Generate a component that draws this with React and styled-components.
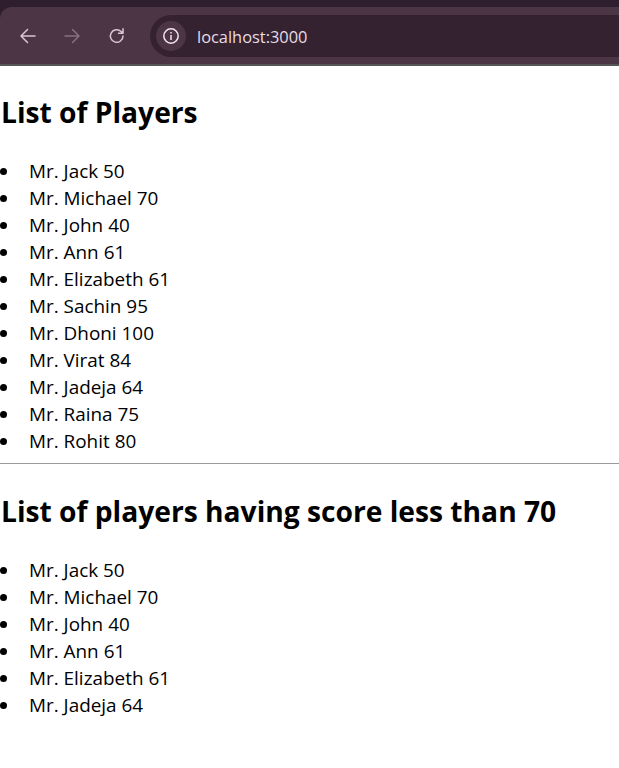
import React from 'react';
import styled, { createGlobalStyle } from 'styled-components';

const Global = createGlobalStyle`
  html, body { margin: 0; padding: 0; background: #fff; }
  body { font-family: "Open Sans", "Noto Sans", "Liberation Sans", sans-serif; color: #000; }
`;
const Chrome = styled.header`
  background: #2f1e2e;
  padding-top: 7px;
`;
const Toolbar = styled.div`
  height: 56px;
  padding: 1px 0 0 16px;
  background: #4c3646;
  border-top-left-radius: 12px;
  border-bottom: 2px solid #555;
  display: flex;
  align-items: center;
`;
const NavButton = styled.span`
  width: 24px;
  height: 24px;
  margin-right: ${p => p.$gap}px;
  display: flex;
  align-items: center;
  justify-content: center;
  color: ${p => p.$color};
`;
const Omnibox = styled.div`
  flex: 1;
  height: 42px;
  background: #342231;
  border-radius: 21px 0 0 21px;
  display: flex;
  align-items: center;
  padding-left: 6px;
`;
const InfoChip = styled.span`
  width: 30px;
  height: 30px;
  border-radius: 50%;
  background: #4c3646;
  display: flex;
  align-items: center;
  justify-content: center;
  color: #f2e6ee;
`;
const Url = styled.span`
  margin-left: 11px;
  font-size: 16.4px;
  color: #e8dce4;
`;
const Page = styled.main``;
const Title = styled.h2`
  font-size: 28.2px;
  line-height: 37px;
  font-weight: 700;
  margin: ${p => p.$top}px 0 ${p => p.$bottom}px 1px;
`;
const List = styled.ul`
  margin: 0;
  padding: 0;
  list-style: none;
`;
const Item = styled.li`
  display: flex;
  align-items: center;
  font-size: 18.9px;
  line-height: 27px;
  &::before {
    content: "";
    width: 7px;
    height: 7px;
    border-radius: 50%;
    background: #000;
    margin-right: 22px;
  }
`;
const Rule = styled.hr`
  margin: 8px 0 0;
  border: 0;
  height: 1px;
  background: #9a9a9a;
`;

const all = [['Jack',50],['Michael',70],['John',40],['Ann',61],['Elizabeth',61],['Sachin',95],['Dhoni',100],['Virat',84],['Jadeja',64],['Raina',75],['Rohit',80]];
const low = [['Jack',50],['Michael',70],['John',40],['Ann',61],['Elizabeth',61],['Jadeja',64]];

const Icon = ({ d }) => (
  <svg width="20" height="20" viewBox="0 0 20 20" fill="none" stroke="currentColor" strokeWidth="1.5" strokeLinecap="round" strokeLinejoin="round"><path d={d} /></svg>
);

export default function App() {
  return (
    <>
      <Global />
      <Chrome>
        <Toolbar>
          <NavButton $gap={20} $color="#d8c6d2"><Icon d="M17 10H3.500M9.500 3.500L3 10l6.500 6.500" /></NavButton>
          <NavButton $gap={21} $color="#87717f"><Icon d="M3 10h13.500M10.500 3.500L17 10l-6.500 6.500" /></NavButton>
          <NavButton $gap={21} $color="#d8c6d2"><Icon d="M16 10a6.300 6.300 0 1 1-1.900-4.500L16 7.300M16 2.800v4.500h-4.500" /></NavButton>
          <Omnibox>
            <InfoChip>
              <svg width="18" height="18" viewBox="0 0 18 18" fill="none" stroke="currentColor" strokeWidth="1.500"><circle cx="9" cy="9" r="7.200" /><path d="M9 8v5M9 5v1.400" /></svg>
            </InfoChip>
            <Url>localhost:3000</Url>
          </Omnibox>
        </Toolbar>
      </Chrome>
      <Page>
        <Title $top={28} $bottom={27}>List of Players</Title>
        <List>{all.map(([n, s]) => <Item key={n}>Mr. {n} {s}</Item>)}</List>
        <Rule />
        <Title $top={29} $bottom={27}>List of players having score less than 70</Title>
        <List>{low.map(([n, s]) => <Item key={n}>Mr. {n} {s}</Item>)}</List>
      </Page>
    </>
  );
}
